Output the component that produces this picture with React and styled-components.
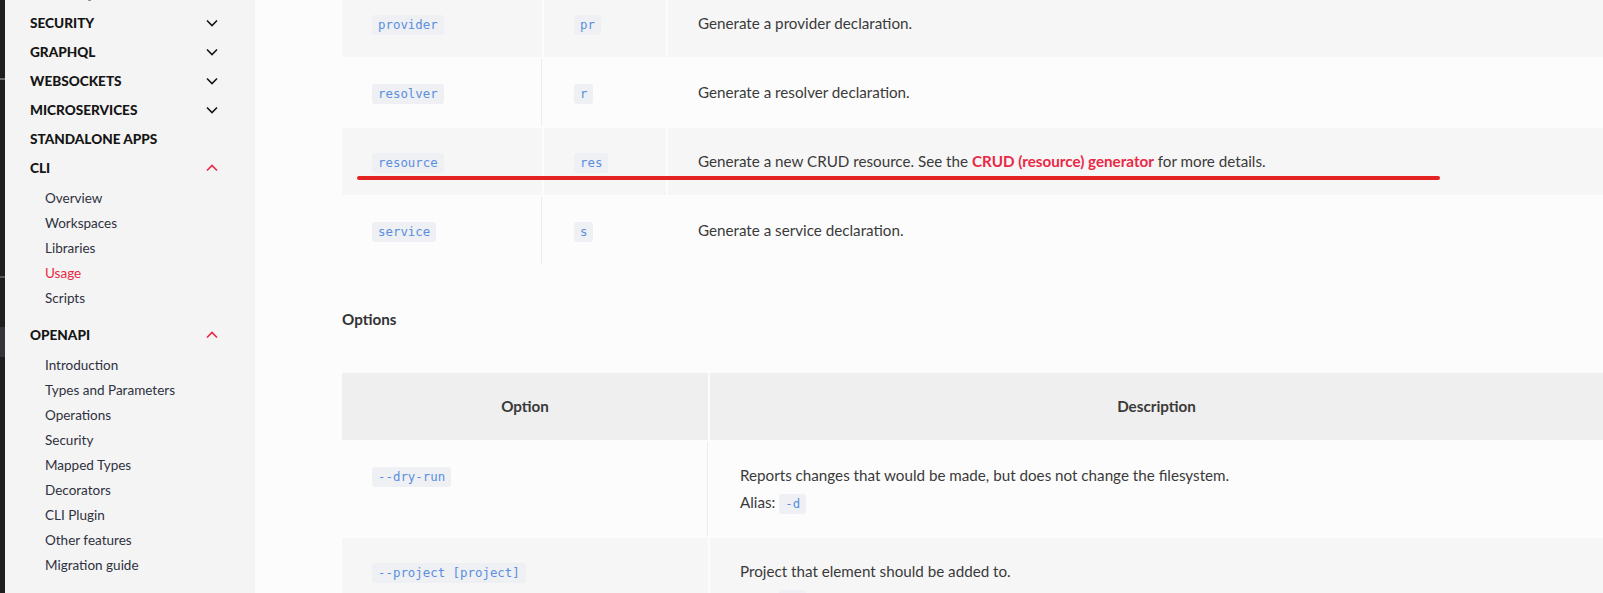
import React from 'react';
import styled, { createGlobalStyle } from 'styled-components';

const GlobalStyle = createGlobalStyle`
  html, body {
    margin: 0;
    background: #fcfcfc;
    font-family: Lato, "Noto Sans", sans-serif;
    overflow: hidden;
  }
`;

const Page = styled.div`
  display: flex;
  height: 593px;
  overflow: hidden;
`;

const Strip = styled.div`
  width: 5px;
  flex-shrink: 0;
  background:
    linear-gradient(#6a6a6a, #6a6a6a) 0 78px / 100% 2px no-repeat,
    linear-gradient(#555, #555) 0 276px / 100% 2px no-repeat,
    linear-gradient(#34343a, #34343a) 0 327px / 100% 30px no-repeat,
    #1e1e1e;
`;

const Sidebar = styled.nav`
  width: 250px;
  flex-shrink: 0;
  background: #f4f4f4;
  padding: 0 37px 0 25px;
  box-sizing: border-box;
`;

const NavList = styled.div`
  margin-top: -21px;
`;

const Section = styled.div`
  display: flex;
  align-items: center;
  justify-content: space-between;
  height: 29px;
  font-size: 13.6px;
  font-weight: 900;
  color: #151515;
  text-transform: uppercase;
  svg {
    color: ${(p) => (p.$open ? '#ea2845' : '#151515')};
  }
`;

const SubList = styled.div`
  padding: 4px 0 9px 15px;
`;

const SubItem = styled.div`
  height: 25px;
  line-height: 25px;
  font-size: 13.5px;
  color: ${(p) => (p.$active ? '#ea2845' : '#2f3140')};
`;

const Main = styled.main`
  flex: 1;
  padding-left: 87px;
  margin-top: -10px;
  min-width: 0;
`;

const Table = styled.div`
  display: flex;
  flex-direction: column;
`;

const Row = styled.div`
  position: relative;
  display: grid;
  grid-template-columns: ${(p) => p.$cols};
  column-gap: 2px;
`;

const Cell = styled.div`
  display: flex;
  flex-direction: column;
  justify-content: ${(p) => (p.$top ? 'flex-start' : 'center')};
  align-items: ${(p) => (p.$head ? 'center' : 'flex-start')};
  padding: 20px 30px;
  margin: ${(p) => (p.$striped || p.$head ? '0' : '2px 0')};
  background: ${(p) => (p.$head ? '#efefef' : p.$striped ? '#f6f6f6' : 'transparent')};
  font-size: 15.2px;
  font-weight: ${(p) => (p.$head ? 700 : 400)};
  line-height: 27px;
  color: #3a3a3a;
  &:first-child {
    border-right: ${(p) => (p.$striped || p.$head ? 'none' : '1px solid #ececec')};
  }
`;

const Code = styled.code`
  display: inline-block;
  font-family: "DejaVu Sans Mono", monospace;
  font-size: 12.4px;
  line-height: 20px;
  color: #5b8ee0;
  background: #eef0f3;
  border-radius: 3px;
  padding: 0 6px;
  vertical-align: middle;
`;

const Link = styled.a`
  color: #ea2845;
  font-weight: 700;
  text-decoration: none;
`;

const Heading = styled.h4`
  margin: 40px 0;
  font-size: 15.2px;
  font-weight: 700;
  line-height: 27px;
  color: #333;
`;

const Annotation = styled.div`
  position: absolute;
  left: 15px;
  top: 48px;
  width: 1083px;
  height: 4px;
  border-radius: 2px;
  background: #e32222;
`;

const Chevron = ({ up }) => (
  <svg width="12" height="8" viewBox="0 0 12 8" fill="none">
    <polyline
      points={up ? '1,6.5 6,1.5 11,6.5' : '1,1.5 6,6.5 11,1.5'}
      stroke="currentColor"
      strokeWidth="1.6"
    />
  </svg>
);

const nav = [
  { title: 'Techniques' },
  { title: 'Security' },
  { title: 'GraphQL' },
  { title: 'Websockets' },
  { title: 'Microservices' },
  { title: 'Standalone apps', plain: true },
  { title: 'CLI', items: ['Overview', 'Workspaces', 'Libraries', 'Usage', 'Scripts'], active: 'Usage' },
  {
    title: 'OpenAPI',
    items: ['Introduction', 'Types and Parameters', 'Operations', 'Security', 'Mapped Types', 'Decorators', 'CLI Plugin', 'Other features', 'Migration guide'],
  },
];

const commands = [
  { name: 'provider', alias: 'pr', desc: 'Generate a provider declaration.' },
  { name: 'resolver', alias: 'r', desc: 'Generate a resolver declaration.' },
  { name: 'resource', alias: 'res', link: true },
  { name: 'service', alias: 's', desc: 'Generate a service declaration.' },
];

const options = [
  { name: '--dry-run', desc: 'Reports changes that would be made, but does not change the filesystem.', alias: '-d' },
  { name: '--project [project]', desc: 'Project that element should be added to.', alias: '-p' },
];

const App = () => {
  return (
    <Page>
      <GlobalStyle />
      <Strip />
      <Sidebar>
        <NavList>
          {nav.map((s) => (
            <div key={s.title}>
              <Section $open={!!s.items}>
                {s.title}
                {!s.plain && <Chevron up={!!s.items} />}
              </Section>
              {s.items && (
                <SubList>
                  {s.items.map((i) => (
                    <SubItem key={i} $active={i === s.active}>{i}</SubItem>
                  ))}
                </SubList>
              )}
            </div>
          ))}
        </NavList>
      </Sidebar>
      <Main>
        <Table>
          {commands.map((c, i) => {
            const striped = i % 2 === 0;
            return (
              <Row key={c.name} $cols="200px 122px 1fr">
                <Cell $striped={striped}><div><Code>{c.name}</Code></div></Cell>
                <Cell $striped={striped}><div><Code>{c.alias}</Code></div></Cell>
                <Cell $striped={striped}>
                  {c.link ? (
                    <div>
                      Generate a new CRUD resource. See the <Link href="#">CRUD (resource) generator</Link> for more details.
                    </div>
                  ) : (
                    <div>{c.desc}</div>
                  )}
                </Cell>
                {c.link && <Annotation />}
              </Row>
            );
          })}
        </Table>
        <Heading>Options</Heading>
        <Table>
          <Row $cols="366px 1fr">
            <Cell $head>Option</Cell>
            <Cell $head>Description</Cell>
          </Row>
          {options.map((o, i) => {
            const striped = i % 2 === 1;
            return (
              <Row key={o.name} $cols="366px 1fr">
                <Cell $striped={striped} $top><div><Code>{o.name}</Code></div></Cell>
                <Cell $striped={striped}>
                  <div>{o.desc}</div>
                  <div>Alias: <Code>{o.alias}</Code></div>
                </Cell>
              </Row>
            );
          })}
        </Table>
      </Main>
    </Page>
  );
};

export default App;
